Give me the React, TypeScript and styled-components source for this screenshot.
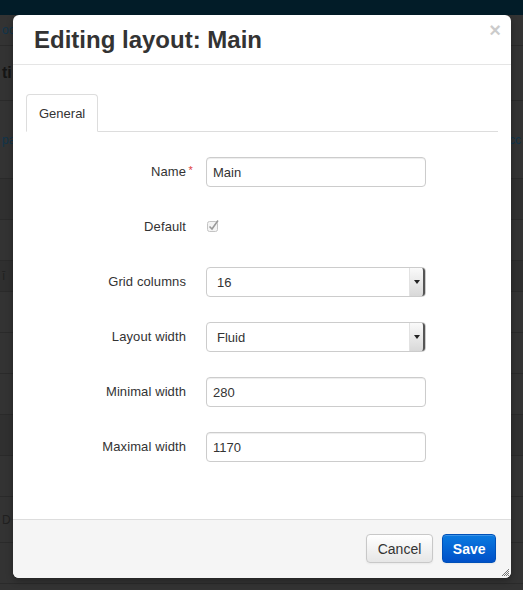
import React from "react";
import styled, { createGlobalStyle } from "styled-components";

const GlobalStyle = createGlobalStyle`
  html, body {
    margin: 0;
    padding: 0;
    height: 100%;
    background: #323232;
    font-family: "Liberation Sans", Arial, sans-serif;
  }
  #root {
    height: 100%;
  }
`;

const Page = styled.div`
  position: relative;
  width: 100%;
  height: 590px;
  overflow: hidden;
  background: #333;
`;

const TopBar = styled.div`
  height: 15px;
  background: #021c28;
`;

const PageRow = styled.div<{ h: number; bg?: string }>`
  height: ${(p) => p.h}px;
  background: ${(p) => p.bg || "#333"};
  border-bottom: 1px solid #2a2a2a;
  display: flex;
  align-items: center;
  justify-content: space-between;
  padding: 0 2px;
  font-size: 13px;
  color: #10344a;
  white-space: nowrap;
`;

const PageText = styled.span<{ bold?: boolean; size?: number; color?: string }>`
  font-weight: ${(p) => (p.bold ? 700 : 400)};
  font-size: ${(p) => p.size || 12}px;
  color: ${(p) => p.color || "#10344a"};
`;

const Modal = styled.div`
  position: absolute;
  left: 13px;
  top: 15px;
  width: 498px;
  height: 563px;
  background: #fff;
  border-radius: 6px;
  box-shadow: 0 3px 7px rgba(0, 0, 0, 0.3);
  display: flex;
  flex-direction: column;
  color: #333;
`;

const Header = styled.div`
  position: relative;
  height: 49px;
  border-bottom: 1px solid #e5e5e5;
  display: flex;
  align-items: center;
  padding: 0 21px;
`;

const Title = styled.h3`
  margin: 0;
  font-size: 24px;
  font-weight: 700;
  color: #333;
`;

const Close = styled.button`
  position: absolute;
  top: 5px;
  right: 10px;
  border: 0;
  background: none;
  padding: 0;
  font-family: "Liberation Sans", Arial, sans-serif;
  font-size: 20px;
  font-weight: 700;
  line-height: 20px;
  color: #000;
  opacity: 0.2;
`;

const Body = styled.div`
  flex: 1;
  padding: 29px 13px 0;
`;

const Tabs = styled.div`
  display: flex;
  border-bottom: 1px solid #ddd;
`;

const Tab = styled.div<{ active?: boolean }>`
  height: 36px;
  line-height: 37px;
  padding: 0 12px;
  margin-bottom: -1px;
  font-size: 13px;
  color: #333;
  background: #fff;
  border: 1px solid ${(p) => (p.active ? "#ddd" : "transparent")};
  border-bottom-color: transparent;
  border-radius: 4px 4px 0 0;
`;

const Form = styled.div`
  margin-top: 25px;
  display: grid;
  grid-template-columns: 160px 220px;
  column-gap: 20px;
  row-gap: 25px;
  align-items: center;
`;

const Label = styled.label`
  position: relative;
  text-align: right;
  font-size: 13px;
  letter-spacing: 0.1px;
  color: #333;
  line-height: 30px;
`;

const Required = styled.span`
  position: absolute;
  right: -7px;
  top: -2px;
  color: #e04040;
  font-size: 11px;
`;

const TextInput = styled.input`
  box-sizing: border-box;
  width: 220px;
  height: 30px;
  padding: 0 6px;
  border: 1px solid #ccc;
  border-radius: 4px;
  box-shadow: inset 0 1px 1px rgba(0, 0, 0, 0.075);
  font-family: "Liberation Sans", Arial, sans-serif;
  font-size: 13px;
  color: #333;
  outline: none;
`;

const SelectWrap = styled.div`
  position: relative;
  width: 220px;
  height: 30px;
`;

const Select = styled.select`
  box-sizing: border-box;
  width: 100%;
  height: 30px;
  padding: 0 10px;
  border: 1px solid #ccc;
  border-radius: 4px;
  background: #fff;
  appearance: none;
  -webkit-appearance: none;
  font-family: "Liberation Sans", Arial, sans-serif;
  font-size: 13px;
  color: #333;
  outline: none;
`;

const SelectArrow = styled.span`
  position: absolute;
  right: 1px;
  top: 1px;
  bottom: 1px;
  width: 13px;
  border-radius: 0 3px 3px 0;
  background: linear-gradient(to bottom, #fafafa, #d8d8d8);
  border-left: 1px solid #e2e2e2;
  border-right: 2px solid #555;
  display: flex;
  align-items: center;
  justify-content: center;
  pointer-events: none;
  &::after {
    content: "";
    border-left: 3px solid transparent;
    border-right: 3px solid transparent;
    border-top: 4px solid #222;
  }
`;

const CheckBox = styled.span`
  display: inline-flex;
  width: 12px;
  height: 12px;
  margin-left: 1px;
  margin-top: -4px;
`;

const Footer = styled.div`
  position: relative;
  border-top: 1px solid #ddd;
  background: #f5f5f5;
  border-radius: 0 0 6px 6px;
  padding: 14px 15px 15px;
  display: flex;
  justify-content: flex-end;
  gap: 9px;
`;

const Button = styled.button<{ primary?: boolean }>`
  height: 29px;
  padding: 0 ${(p) => (p.primary ? "9.5px" : "11px")};
  border-radius: 4px;
  font-family: "Liberation Sans", Arial, sans-serif;
  font-size: 14px;
  font-weight: ${(p) => (p.primary ? 700 : 400)};
  color: ${(p) => (p.primary ? "#fff" : "#333")};
  border: 1px solid ${(p) => (p.primary ? "#0050b8" : "#c8c8c8")};
  background: ${(p) =>
    p.primary
      ? "linear-gradient(to bottom, #0a7ae0, #0050c8)"
      : "linear-gradient(to bottom, #ffffff, #e6e6e6)"};
  box-shadow: inset 0 1px 0 rgba(255, 255, 255, 0.2), 0 1px 2px rgba(0, 0, 0, 0.05);
`;

const Grip = styled.svg`
  position: absolute;
  right: 2px;
  bottom: 2px;
`;

const fields = [
  { label: "Name", kind: "text", value: "Main", required: true },
  { label: "Default", kind: "check" },
  { label: "Grid columns", kind: "select", value: "16" },
  { label: "Layout width", kind: "select", value: "Fluid" },
  { label: "Minimal width", kind: "text", value: "280" },
  { label: "Maximal width", kind: "text", value: "1170" },
];

export default function App() {
  return (
    <>
      <GlobalStyle />
      <Page>
        <TopBar />
        <PageRow h={30}>
          <PageText>oc</PageText>
        </PageRow>
        <PageRow h={54}>
          <PageText bold size={16} color="#151515">ti</PageText>
        </PageRow>
        <PageRow h={77}>
          <PageText>pa</PageText>
          <PageText>cc</PageText>
        </PageRow>
        <PageRow h={40} bg="#303030" />
        <PageRow h={40} />
        <PageRow h={30} bg="#2f2f2f">
          <PageText color="#202020">ī</PageText>
        </PageRow>
        <PageRow h={40} />
        <PageRow h={40} />
        <PageRow h={40} />
        <PageRow h={40} bg="#303030" />
        <PageRow h={40} />
        <PageRow h={45}>
          <PageText color="#202020">D</PageText>
        </PageRow>
        <PageRow h={40} />

        <Modal>
          <Header>
            <Title>Editing layout: Main</Title>
            <Close>×</Close>
          </Header>
          <Body>
            <Tabs>
              <Tab active>General</Tab>
            </Tabs>
            <Form>
              {fields.map((f) => (
                <React.Fragment key={f.label}>
                  <Label>
                    {f.label}
                    {f.required && <Required>*</Required>}
                  </Label>
                  {f.kind === "text" && <TextInput defaultValue={f.value} />}
                  {f.kind === "select" && (
                    <SelectWrap>
                      <Select defaultValue={f.value}>
                        <option>{f.value}</option>
                      </Select>
                      <SelectArrow />
                    </SelectWrap>
                  )}
                  {f.kind === "check" && (
                    <div>
                      <CheckBox>
                        <svg width="12" height="12" viewBox="0 0 12 12">
                          <rect x="0.5" y="1.5" width="10" height="10" rx="2" fill="#f4f4f4" stroke="#c4c4c4" />
                          <path d="M2.5 6.5 L5 9 L11 0.5" fill="none" stroke="#9a9a9a" strokeWidth="1.6" />
                        </svg>
                      </CheckBox>
                    </div>
                  )}
                </React.Fragment>
              ))}
            </Form>
          </Body>
          <Footer>
            <Button>Cancel</Button>
            <Button primary>Save</Button>
            <Grip width="7" height="7" viewBox="0 0 7 7">
              <path d="M0 7 L7 0 M2 7 L7 2 M4 7 L7 4 M6 7 L7 6" stroke="#555" strokeWidth="0.8" />
            </Grip>
          </Footer>
        </Modal>
      </Page>
    </>
  );
}
